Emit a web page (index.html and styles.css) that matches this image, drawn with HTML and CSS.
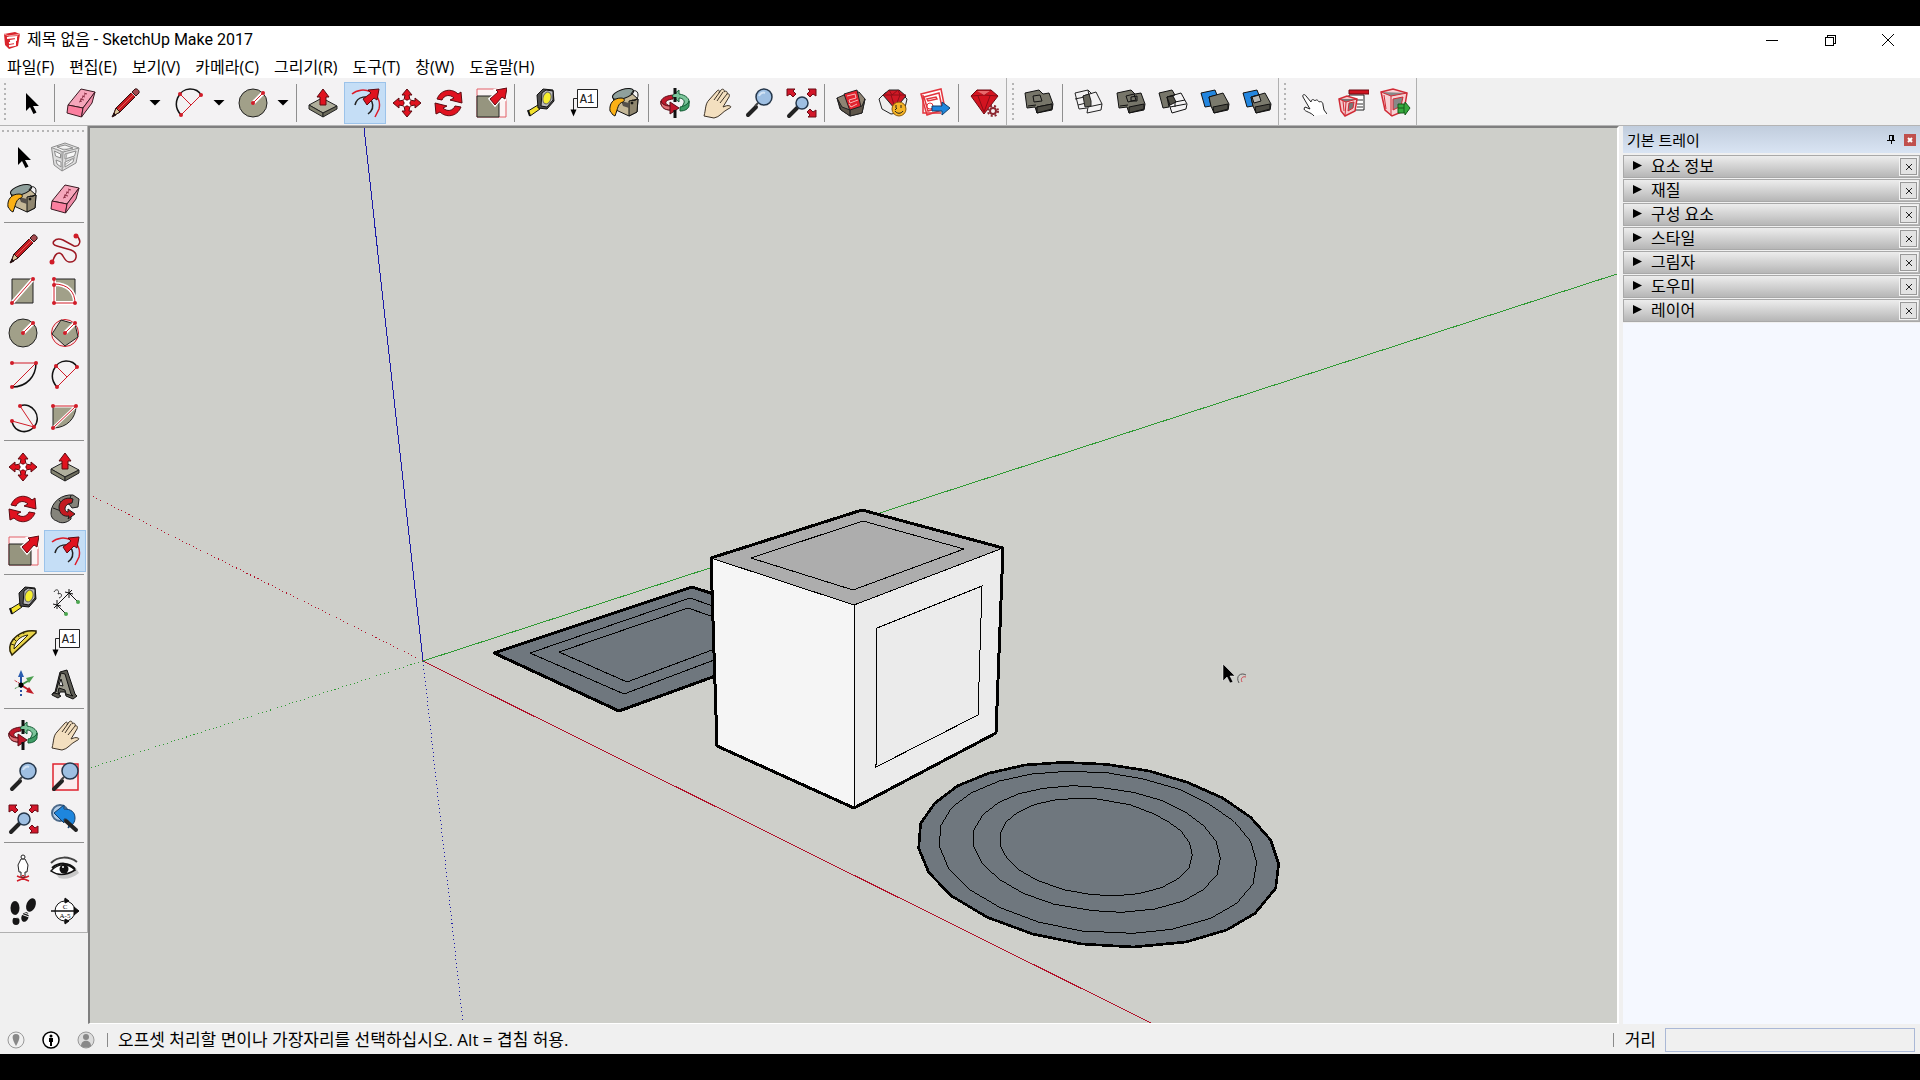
FILE: index.html
```html
<!DOCTYPE html>
<html lang="ko">

<head>
    <meta charset="UTF-8">
    <meta name="viewport" content="width=device-width, initial-scale=1.0">
    <title>제목 없음 - SketchUp Make 2017</title>
    <link rel="stylesheet" href="styles.css">
</head>

<body>
    <!-- icon sprite -->
    <svg class="sprite" aria-hidden="true">
        <symbol id="i-select" viewBox="0 0 32 32">
            <path d="M11 6v18l4-4 3.500 7 3-1.500-3.500-6.500h6z" fill="#000" />
        </symbol>
        <symbol id="i-component" viewBox="0 0 32 32" fill="none" stroke="#8d8d8d">
            <path d="M2.500 6.500L16 2l14 5-3 15-14 8L5 24z" fill="#dedede" />
            <path d="M2.500 6.500L14 11l16-4M14 11l-1 19M5.500 10l6 3v4l-5-2zM7 19l5 2v5l-4-3zM16 13l11-3-1.500 5L16 18zM16 21l9-4-1 4-8 5zM8 6l8-2 8 3-9 2z" fill="#f6f6f6" />
            <path d="M7 8l5 2 2 17M18 12l-2 12 10-8" stroke="#aaa" />
        </symbol>
        <symbol id="i-paint" viewBox="0 0 32 32" stroke="#111" stroke-linejoin="round">
            <path d="M4 10L20 4l9 8-1 13-8 4-13-6z" fill="#c4b797" />
            <path d="M20 14l9-2-1 13-8 4z" fill="#8f866f" />
            <path d="M12 14l8 2v5l-6-2z" fill="#55504a" stroke="none" />
            <ellipse cx="14" cy="7" rx="11" ry="4.500" transform="rotate(-18 14 7)" fill="#8fa09c" />
            <path d="M22 7c2-5 7-4 7 1 0 4-3 7-6 5" fill="none" />
            <path d="M1 24c-1-7 3-13 11-13 4 0 4 3 2 4-5 1-5 6-8 14-3-1-3-3-5-5z" fill="#fbb116" />
            <circle cx="23" cy="16" r="1" />
        </symbol>
        <symbol id="i-eraser" viewBox="0 0 32 32" stroke="#3a1a22" stroke-linejoin="round">
            <path d="M16 2l14 3-12 16-15-3z" fill="#f6a6bb" />
            <path d="M3 18l15 3-1.500 9L2 26z" fill="#fb7f9f" />
            <path d="M30 5l-3 11-10.500 14L18 21z" fill="#f08ca8" />
            <path d="M14 15l3-1M15 12l4 1M17 9l3 1M19 6l3 1M15 14l6-8" stroke="#8d3046" />
        </symbol>
        <symbol id="i-pencil" viewBox="0 0 32 32" stroke="#2c1010">
            <path d="M7 21L25 3l4 4-18 18-7 4z" fill="#c21a20" />
            <path d="M9 23L27 5" stroke="#ea5a55" />
            <path d="M7 21l4 4-7 4z" fill="#dcc79a" />
            <path d="M3 30l2-4 2 2z" fill="#111" />
            <path d="M23 5l3-3c2-1 5 2 4 4l-3 3z" fill="#a44b50" />
            <path d="M22 5l5 5" stroke="#ddd" />
        </symbol>
        <symbol id="i-freehand" viewBox="0 0 32 32" fill="none">
            <path d="M27 2C34 8 30 14 25 13L14 7C6 4 0 11 8 13L22 17C30 20 28 30 20 29 14 28 15 20 10 20 6 20 5 25 3 30" stroke="#9d1822" stroke-width="1.500" />
            <circle cx="3" cy="29" r="2.500" fill="#d01c28" />
            <circle cx="27" cy="3" r="2.500" fill="#d01c28" />
        </symbol>
        <symbol id="i-rect" viewBox="0 0 32 32">
            <path d="M5 4h21v24H5z" fill="#a1a089" stroke="#222" />
            <path d="M5 28L26 4" stroke="#fff" stroke-width="4" />
            <path d="M5 28L26 4" stroke="#d01c28" />
            <circle cx="5" cy="28" r="2" fill="#d01c28" />
            <circle cx="26" cy="4" r="2" fill="#d01c28" />
        </symbol>
        <symbol id="i-rotrect" viewBox="0 0 32 32" fill="none">
            <path d="M5 4h21v24H5z" fill="#a1a089" stroke="#222" />
            <path d="M5 4v24h21C26 17 19 9 5 9" stroke="#fff" stroke-width="4" />
            <path d="M5 4v24h21C26 17 19 9 5 9" stroke="#d01c28" />
            <g fill="#d01c28"><circle cx="5" cy="4" r="2" /><circle cx="5" cy="10" r="2" /><circle cx="5" cy="28" r="2" /><circle cx="26" cy="28" r="2" /></g>
        </symbol>
        <symbol id="i-circle" viewBox="0 0 32 32">
            <circle cx="16" cy="16" r="14" fill="#a1a089" stroke="#222" />
            <path d="M16 16l10-10" stroke="#fff" stroke-width="4" />
            <path d="M16 16l10-10" stroke="#d01c28" />
            <circle cx="16" cy="16" r="2" fill="#d01c28" />
            <circle cx="26" cy="6" r="2" fill="#d01c28" />
        </symbol>
        <symbol id="i-polygon" viewBox="0 0 32 32">
            <circle cx="16" cy="16" r="13.500" fill="#f7e6e6" stroke="#d01c28" />
            <path d="M12 3l14 4 3 13-13 9L3 17z" fill="#a1a089" stroke="#222" />
            <path d="M16 16l10-10" stroke="#fff" stroke-width="4" />
            <path d="M16 16l10-10" stroke="#d01c28" />
            <circle cx="16" cy="16" r="2" fill="#d01c28" />
            <circle cx="26" cy="6" r="2" fill="#d01c28" />
        </symbol>
        <symbol id="i-arc" viewBox="0 0 32 32" fill="none">
            <path d="M29 4C29 17 20 28 5 28" stroke="#111" stroke-width="1.500" />
            <path d="M5 28L29 4H5" stroke="#d01c28" />
            <g fill="#d01c28"><circle cx="5" cy="4" r="2" /><circle cx="29" cy="4" r="2" /><circle cx="5" cy="28" r="2" /></g>
        </symbol>
        <symbol id="i-arc2" viewBox="0 0 32 32" fill="none">
            <path d="M8 28C-2 17 6 2 17 2c5 0 9 2 11 6" stroke="#111" stroke-width="1.500" />
            <path d="M8 28L28 8M7 7l11 11" stroke="#d01c28" />
            <g fill="#d01c28"><circle cx="7" cy="7" r="2" /><circle cx="28" cy="8" r="2" /><circle cx="8" cy="28" r="2" /></g>
        </symbol>
        <symbol id="i-arc3" viewBox="0 0 32 32" fill="none">
            <path d="M13 5c12-5 23 11 14 21C19 34 8 31 5 21" stroke="#111" stroke-width="1.500" />
            <path d="M13 5l14 21L5 20" stroke="#d01c28" />
            <g fill="#d01c28"><circle cx="13" cy="5" r="2" /><circle cx="27" cy="26" r="2" /><circle cx="5" cy="20" r="2" /></g>
        </symbol>
        <symbol id="i-pie" viewBox="0 0 32 32" fill="none">
            <path d="M4 5h23c0 12-9 22-23 22z" fill="#a1a089" stroke="#222" />
            <path d="M4 27L27 5H4" stroke="#fff" stroke-width="3" />
            <path d="M4 27L27 5H4" stroke="#d01c28" />
            <g fill="#d01c28"><circle cx="4" cy="5" r="2" /><circle cx="27" cy="5" r="2" /><circle cx="4" cy="27" r="2" /></g>
        </symbol>
        <symbol id="i-move" viewBox="0 0 32 32" fill="#e0121f" stroke="#5c0a10">
            <path d="M16 2l5 6h-3l1 5h-6l1-5h-3z" />
            <path d="M16 30l-5-6h3l-1-5h6l-1 5h3z" />
            <path d="M2 16l6-5v3l5-1v6l-5-1v3z" />
            <path d="M30 16l-6 5v-3l-5 1v-6l5 1v-3z" />
            <path d="M13 13l6 6M19 13l-6 6" stroke="#fff" stroke-width="2" />
        </symbol>
        <symbol id="i-pushpull" viewBox="0 0 32 32" stroke="#222" stroke-linejoin="round">
            <path d="M2 18l13-7 15 8-14 7z" fill="#b0af9c" />
            <path d="M2 18l14 8v4L2 22z" fill="#83836f" />
            <path d="M30 19l-14 7v4l14-8z" fill="#6c6b5b" />
            <path d="M13 18v-8H10l6-8 6 8h-3v8z" fill="#e0121f" stroke="#5c0a10" />
        </symbol>
        <symbol id="i-rotate" viewBox="0 0 32 32" fill="#e0121f" stroke="#5c0a10">
            <path d="M4 12C8 2 19 1 25 7l3-2 1 11-12-3 4-2c-4-4-10-3-12 2z" />
            <path d="M28 20C24 30 13 31 7 25l-4 2-1-11 12 3-4 2c4 4 10 3 12-2z" />
        </symbol>
        <symbol id="i-followme" viewBox="0 0 32 32" stroke="#1c1c1c">
            <path d="M2 20C2 9 13 1 24 2l6 4-1 8-6 1-3-4c-6 0-9 4-7 8l9 3v4c-4 4-10 5-14 2-4-1-6-4-6-8z" fill="#85847b" />
            <path d="M22 2l-2 8M4 15l8 3M10 7l5 6" />
            <path d="M24 6c-7-3-14 2-14 8 0 7 5 10 10 9l-1 3 7-5-7-5v3c-4 0-5-8 4-9z" fill="#c21a20" />
        </symbol>
        <symbol id="i-scale" viewBox="0 0 32 32">
            <path d="M2 2h29v28H2z" fill="#fbf4f4" stroke="#e36068" />
            <path d="M2 9h22v21H2z" fill="#96957f" stroke="#222" />
            <path d="M15 12l8-7-2-2 11-2-2 11-3-2-7 8z" fill="#e0121f" stroke="#fff" stroke-width="3" />
            <path d="M15 12l8-7-2-2 11-2-2 11-3-2-7 8z" fill="#e0121f" stroke="#5c0a10" />
        </symbol>
        <symbol id="i-offset" viewBox="0 0 32 32" fill="none">
            <path d="M3 7C13-2 34 5 30 22l-4 8" stroke="#dd1a28" stroke-width="1.500" />
            <path d="M6 18c2-9 14-11 17-3 2 5 0 9-4 12" stroke="#222" stroke-width="1.500" />
            <path d="M14 12l8-6-3-3 11-1-2 11-3-2-7 7z" fill="#e0121f" stroke="#5c0a10" />
        </symbol>
        <symbol id="i-tape" viewBox="0 0 32 32" stroke="#111">
            <path d="M3 24l10-6 2 4-10 7z" fill="#f3e22c" />
            <path d="M3 23l2 6" stroke-width="2" />
            <path d="M12 8l6-6 10 1 1 11-7 8-9-1z" fill="#4b4b4b" />
            <path d="M17 6l4-3 7 1v9l-6 7-6-1z" fill="#bdbdbd" />
            <ellipse cx="22" cy="11" rx="4" ry="6" transform="rotate(16 22 11)" fill="#f6ee2e" stroke="#666" />
        </symbol>
        <symbol id="i-dimension" viewBox="0 0 32 32" fill="none" stroke="#111">
            <path d="M8 20L20 8M8 20l9 9M20 8l9 9" />
            <path d="M4 19l8 2M5 23l6-6M8 15v9M16 7l8 2M17 11l6-6M20 4v9" />
            <path d="M5 7c2-4 6-2 4 2 4-2 5 3 1 4" stroke="#333" />
            <circle cx="17" cy="29" r="2" fill="#4ba64f" stroke="none" />
            <circle cx="29" cy="17" r="2" fill="#4ba64f" stroke="none" />
        </symbol>
        <symbol id="i-text" viewBox="0 0 32 32">
            <path d="M10.500 2.500h20v18h-20z" fill="#fff" stroke="#222" />
            <path d="M10 11.500H6.500V23" fill="none" stroke="#222" />
            <path d="M3.500 22.500h6l-3 7z" />
            <text x="20" y="16" text-anchor="middle" class="icon-text">A1</text>
        </symbol>
        <symbol id="i-protractor" viewBox="0 0 32 32" stroke="#2b2405">
            <path d="M29 4C15 2 1 12 3 24l2 4L29 6z" fill="#e9d44a" stroke-width="1.500" />
            <path d="M21 8C13 9 7 15 7 22z" fill="#f3f2f3" />
            <path d="M16 5l1 2M11 8l1 2M7 12l2 2M4 17l3 1" />
        </symbol>
        <symbol id="i-axes" viewBox="0 0 32 32" fill="none">
            <path d="M15 16L7 11" stroke="#c01c28" stroke-dasharray="2 1" />
            <path d="M15 16l-8 4" stroke="#3f8f46" stroke-dasharray="2 1" />
            <path d="M14 17v11" stroke="#2a4fa0" stroke-width="2" stroke-dasharray="2 2" />
            <path d="M14 16V6" stroke="#2a4fa0" stroke-width="2" /><path d="M11 8l3-7 3 7z" fill="#2a5db0" />
            <path d="M14 16l7-4" stroke="#3f8f46" stroke-width="2" /><path d="M19 9l8-2-5 7z" fill="#4b9f50" />
            <path d="M14 16l8 5" stroke="#c01c28" stroke-width="2" /><path d="M22 18l5 7-8-2z" fill="#c01c28" />
            <circle cx="14" cy="16" r="2.500" fill="#000" />
        </symbol>
        <symbol id="i-text3d" viewBox="0 0 32 32" stroke="#111" stroke-linejoin="round">
            <path d="M3 25l3-2 5-20 7-2 8 24 2 2-4 3-7-3-1-4h-5l-1 3 2 1-3 2-6-3z" fill="#5c5b53" />
            <path d="M4 24l3-1 5-19 4 1 6 20 2 2-7-2-1-4-6-2-1 4 1 2-5-1z" fill="#9b9a8d" />
            <path d="M12 10l2 7-4-1z" fill="#eee" />
        </symbol>
        <symbol id="i-orbit" viewBox="0 0 32 32" stroke-linejoin="round">
            <path d="M14 8C4 9 1 13 2 17c1 3 5 6 9 6v4l9-6-9-6v4c-6-2-6-6 3-7z" fill="#c0182b" stroke="#5a0c16" />
            <path d="M2 14c1 3 4 5 9 5v4c-5 0-8-2-9-6z" fill="#de7076" stroke="#5a0c16" />
            <path d="M13 9l7-6v4c7 1 11 5 10 9-1 4-4 6-8 6l3-6c1-3-2-5-5-5v4z" fill="#7cc59b" stroke="#145c35" />
            <path d="M30 14v5c-1 3-4 5-9 5v-4c5-1 8-3 9-6z" fill="#3d9c65" stroke="#145c35" />
            <path d="M16 1v6M16 10v5M16 23v8" stroke="#111" stroke-width="3" />
        </symbol>
        <symbol id="i-pan" viewBox="0 0 32 32">
            <path d="M3 29c2-7 1-12 5-16l8-9c2-2 3 0 2 2l2-3c2-2 4 0 3 2 2-2 4 0 3 2 2-1 3 1 2 3l-6 10c3-1 4-2 7-1 2 1 0 2-2 3-6 3-8 8-14 9z" fill="#f3dfbf" stroke="#3c3125" />
            <path d="M18 6l-5 7M22 5l-6 9M26 7l-7 9" stroke="#3c3125" fill="none" />
        </symbol>
        <symbol id="i-zoom" viewBox="0 0 32 32">
            <path d="M5 28l8-8" stroke="#222" stroke-width="4" stroke-linecap="round" />
            <path d="M12 19l3-3" stroke="#444" stroke-width="2" />
            <circle cx="21" cy="10" r="8" fill="#9ebfe2" stroke="#24364a" stroke-width="1.500" />
            <path d="M16 9c1-3 4-4 6-3" stroke="#d2e3f4" stroke-width="2" fill="none" />
        </symbol>
        <symbol id="i-zoomwin" viewBox="0 0 32 32">
            <path d="M4 3h25v26H4z" fill="#fbecee" stroke="#e0222e" stroke-width="1.500" />
            <path d="M5 28l8-8" stroke="#222" stroke-width="4" stroke-linecap="round" />
            <circle cx="21" cy="10" r="8" fill="#9ebfe2" stroke="#24364a" stroke-width="1.500" />
            <path d="M12 19l3-3" stroke="#444" stroke-width="2" />
        </symbol>
        <symbol id="i-zoomext" viewBox="0 0 32 32">
            <path d="M4 29l8-8" stroke="#222" stroke-width="4" stroke-linecap="round" />
            <circle cx="17" cy="16" r="6" fill="#9ebfe2" stroke="#24364a" stroke-width="1.500" />
            <g fill="#d3172a" stroke="#6b0c15">
                <path d="M2 2h8l-2 2 3 3-3 3-3-3-3 2z" />
                <path d="M31 2h-8l2 2-3 3 3 3 3-3 3 2z" />
                <path d="M31 30h-8l2-2-3-3 3-3 3 3 3-2z" />
            </g>
        </symbol>
        <symbol id="i-prev" viewBox="0 0 32 32">
            <circle cx="11" cy="10" r="8" fill="#b4cde6" stroke="#4c6a8a" stroke-width="2" />
            <path d="M5 10l10-8v4c7 0 11 3 11 9 0 4-2 7-7 10 2-5 0-10-4-9v4z" fill="#1e86dd" stroke="#123e6b" />
            <path d="M17 18l10 9" stroke="#222" stroke-width="4" stroke-linecap="round" />
        </symbol>
        <symbol id="i-camera" viewBox="0 0 32 32" fill="#fff" stroke="#222">
            <path d="M10 28l12-5M10 23l12 5M16 22v5" stroke="#d01c28" stroke-width="1.500" />
            <path d="M14 6h4l3 6-1 7h-2v5h-4v-5h-2l-1-7z" />
            <circle cx="16" cy="4" r="2" />
            <path d="M13 25l3-3 3 3" fill="none" stroke="#d01c28" />
        </symbol>
        <symbol id="i-look" viewBox="0 0 32 32" fill="none">
            <path d="M7 21c8 3 13 0 20-6l3 5c-6 5-14 7-20 5z" fill="#c8c8c8" />
            <path d="M2 10C9 3 20 3 28 9" stroke="#444" stroke-width="2" />
            <path d="M2 18c6-7 16-9 24-1-8 5-17 6-24 1z" fill="#fff" stroke="#111" stroke-width="1.500" />
            <circle cx="15" cy="16" r="4.500" fill="#111" />
            <circle cx="14" cy="14" r="1" fill="#fff" />
            <path d="M3 15c7-6 17-6 23 1" stroke="#111" stroke-width="2" />
        </symbol>
        <symbol id="i-walk" viewBox="0 0 32 32" fill="#161616">
            <ellipse cx="8" cy="13" rx="4.500" ry="7" /><ellipse cx="9" cy="26" rx="3.500" ry="4" />
            <ellipse cx="24" cy="10" rx="4.500" ry="7" transform="rotate(22 24 10)" />
            <ellipse cx="18" cy="22" rx="3.500" ry="5" transform="rotate(22 18 22)" />
            <path d="M4 20l9 1M4 22l9 1M15 17l8 3M14 19l8 3" stroke="#f3f2f3" />
        </symbol>
        <symbol id="i-section" viewBox="0 0 32 32" stroke="#111">
            <path d="M16 4l5 4-5 4zM16 20l5 4-5 4z" fill="#111" />
            <circle cx="16" cy="16" r="10" fill="#fff" />
            <path d="M2 16h27" stroke-width="1.500" />
            <path d="M16 3l4 3-4 2zM16 29l4-3-4-2zM25 12l5 4-5 4z" fill="#111" />
            <g class="section-text" stroke="none"><text x="16" y="14">C</text><text x="16" y="23">A-5</text></g>
        </symbol>
        <symbol id="i-warehouse" viewBox="0 0 32 32" stroke="#222">
            <path d="M2 11l7-3 15-3 6 7-3 14-12 3-10-7z" fill="#8f8473" />
            <path d="M9 7L22 3l4 17-11 4z" fill="#e2242e" />
            <path d="M12 9l8-2 1 4-7 2 1 3 8-3M14 17l2 3 6-3" fill="none" stroke="#f9b9ba" />
            <path d="M2 11l5 9 8 3v6l-9-6zM15 23l12-4 3-7-3 14-12 3z" fill="#5e564a" />
        </symbol>
        <symbol id="i-extwarehouse" viewBox="0 0 32 32" stroke="#222">
            <path d="M2 12l6-6 14-2 8 8-3 13-13 2-9-5z" fill="#eee" />
            <path d="M6 8l6-5h10l7 6-11 13z" fill="#cf1825" />
            <path d="M6 8h23M12 3l3 5 6-5 2 5-5 13-4-13" fill="none" stroke="#8e0e18" />
            <circle cx="22" cy="22" r="7" fill="#f5b426" stroke="#8b5a08" />
            <path d="M19 18v3M24 18v3M18 24c2 3 6 3 8 0M20 21l-2 2" fill="none" stroke="#222" />
        </symbol>
        <symbol id="i-layout" viewBox="0 0 32 32" fill="#fff" stroke="#e3343d">
            <path d="M2 7l20-5 4 20-18 6z" stroke-width="1.500" />
            <path d="M5 10l15-4 3 14-14 4zM8 12l9-2 1 2-9 2zM4 8v18h18" fill="none" stroke-width="1.500" />
            <circle cx="11" cy="19" r="3" />
            <path d="M13 19h10v-4l8 6-8 7v-4H13z" fill="#1e86dd" stroke="#123e6b" />
        </symbol>
        <symbol id="i-extmanager" viewBox="0 0 32 32">
            <path d="M2 9l6-6h14l7 6-14 18z" fill="#d31420" stroke="#6d0a12" />
            <path d="M8 3l7 5 7-5M2 9l13-1 14 1M9 9l6 16 6-16" fill="none" stroke="#8d0c16" />
            <path d="M8 4h13l-6 4z" fill="#e96a6c" />
            <circle cx="24" cy="24" r="5" fill="#f3f2f3" stroke="#8c2630" stroke-width="2" stroke-dasharray="2 2" />
            <circle cx="24" cy="24" r="3" fill="#f3f2f3" stroke="#8c2630" stroke-width="2" />
        </symbol>
        <symbol id="i-solid-outer" viewBox="0 0 32 32" stroke="#111" stroke-linejoin="round">
            <path d="M2 6l14-3 4 4 6-1 4 11-1 6-15 3-2-6-8 1z" fill="#77766a" />
            <path d="M5 19l8-1M14 20l15-3M14 20v6M10 9l7-1 2 6-8 1z" fill="#7c7b6f" />
            <path d="M14 20l15-3v5l-15 4z" fill="#4d4c44" />
        </symbol>
        <symbol id="i-solid-intersect" viewBox="0 0 32 32" stroke="#222" fill="none">
            <path d="M2 6l13-3 2 12-12 3zM5 18l1 4 8-1M10 9l13-4 6 12-14 3zM15 20l-1 6 14-3 1-6M15 3l4 4M2 12l14-3" />
            <path d="M10 9l6-2 2 7v5l-6 1z" fill="#66655b" />
        </symbol>
        <symbol id="i-solid-union" viewBox="0 0 32 32" stroke="#111">
            <path d="M2 6l14-3 4 4 6-1 4 11-1 6-15 3-2-6-8 1z" fill="#77766a" />
            <path d="M14 20l15-3v5l-15 4z" fill="#4d4c44" />
            <path d="M5 19l8-1M11 9l8-2 2 6-8 2zM16 10l6-1v5h-6z" fill="none" />
        </symbol>
        <symbol id="i-solid-subtract" viewBox="0 0 32 32" stroke="#111">
            <path d="M2 6l13-3 3 5-8 2 2 10-6 1z" fill="#77766a" />
            <path d="M10 10l14-4 6 11-1 5-14 4-2-6zM13 20l16-3M15 9l3 6M18 15v5M18 15l10-2" fill="none" />
            <path d="M10 10l6-1 3 6-6 3z" fill="#4f4e45" />
        </symbol>
        <symbol id="i-solid-trim" viewBox="0 0 32 32" stroke="#111">
            <path d="M2 6l14-3 2 5-8 2 2 9-6 1z" fill="#2386df" />
            <path d="M10 10l14-4 6 11-1 6-14 3-3-7z" fill="#7b7a6d" />
            <path d="M14 20l15-3v5l-14 4z" fill="#4d4c44" />
        </symbol>
        <symbol id="i-solid-split" viewBox="0 0 32 32" stroke="#111">
            <path d="M2 6l14-3 2 5-8 2 2 9-6 1z" fill="#2386df" />
            <path d="M10 10l14-4 6 11-1 6-14 3-3-7z" fill="#7b7a6d" />
            <path d="M14 20l15-3v5l-14 4z" fill="#4d4c44" />
            <path d="M11 10l7-2 2 6-7 2z" fill="#b9b8b2" />
        </symbol>
        <symbol id="i-interact" viewBox="0 0 32 32">
            <path d="M19 29c-3-4-9-4-10-7l1-2 5 2-7-12c-1-3 2-3 3-1l5 6c0-3 3-3 4-1 1-2 3-1 4 1 2-1 4 0 4 3l1 5 3 4" fill="#fff" stroke="#222" />
        </symbol>
        <symbol id="i-options" viewBox="0 0 32 32" stroke="#d12a35">
            <path d="M12 8h15v15H12z" fill="#fff" stroke="#222" />
            <path d="M20 13h6M20 17h6M20 20h6" stroke="#333" />
            <path d="M12 3h20v4H12z" fill="#d01420" stroke="#6d0a12" />
            <path d="M2 12l8-3 10 3-2 12-10 5-4-5z" fill="#f4c9cb" stroke-width="1.500" />
            <path d="M2 12l7 3 11-3M9 15l-1 14M6 14l1 10M12 16l5-1-1 6-5 3z" fill="#777" />
        </symbol>
        <symbol id="i-attributes" viewBox="0 0 32 32" stroke="#d12a35">
            <path d="M2 5l12-3 14 4-3 18-12 5-7-6z" fill="#f6d2d4" stroke-width="1.500" />
            <path d="M2 5l10 4 16-3M12 9v20M5 8l2 14M14 12l10-2-2 9-8 4z" fill="#888" />
            <path d="M19 17h7v-2l5 6-5 7v-2h-7zM19 21h6M25 17v9" fill="#35a93c" stroke="#155a1a" />
        </symbol>
    </svg>

    <div class="window">
        <header class="titlebar">
            <svg class="app-logo" viewBox="0 0 18 18" aria-hidden="true">
                <path d="M1 3l11-2 5 2-2 12-9 3-4-4z" fill="#d9252c" />
                <path d="M1 3l5 2 11-2M6 5l9 0" stroke="#f39a9a" fill="none" />
                <path d="M4 7l9-1v3l-6 1M6 12l6-1v3l-6 1" stroke="#fff" stroke-width="2" fill="none" />
            </svg>
            <h1 class="window-title">제목 없음 - SketchUp Make 2017</h1>
            <div class="window-controls">
                <button type="button" aria-label="최소화"><svg viewBox="0 0 12 12"><path d="M0 6h12" /></svg></button>
                <button type="button" aria-label="이전 크기로"><svg viewBox="0 0 12 12"><path d="M1 3h8v8H1zM3 3V1h8v8H9" /></svg></button>
                <button type="button" aria-label="닫기"><svg viewBox="0 0 12 12"><path d="M0 0l12 12M12 0L0 12" /></svg></button>
            </div>
        </header>

        <nav class="menubar">
            <button type="button">파일(F)</button>
            <button type="button">편집(E)</button>
            <button type="button">보기(V)</button>
            <button type="button">카메라(C)</button>
            <button type="button">그리기(R)</button>
            <button type="button">도구(T)</button>
            <button type="button">창(W)</button>
            <button type="button">도움말(H)</button>
        </nav>

        <div class="toolbar">
            <div class="toolbar-group">
                <span class="grip"></span>
                <button type="button" class="tool" aria-label="선택"><svg><use href="#i-select" /></svg></button>
                <span class="sep"></span>
                <button type="button" class="tool" aria-label="지우개"><svg><use href="#i-eraser" /></svg></button>
                <div class="split">
                    <button type="button" class="tool" aria-label="선"><svg><use href="#i-pencil" /></svg></button>
                    <button type="button" class="drop" aria-label="선 도구"></button>
                </div>
                <div class="split">
                    <button type="button" class="tool" aria-label="호"><svg><use href="#i-arc2" /></svg></button>
                    <button type="button" class="drop" aria-label="호 도구"></button>
                </div>
                <div class="split">
                    <button type="button" class="tool" aria-label="원"><svg><use href="#i-circle" /></svg></button>
                    <button type="button" class="drop" aria-label="도형 도구"></button>
                </div>
                <span class="sep"></span>
                <button type="button" class="tool" aria-label="밀기/끌기"><svg><use href="#i-pushpull" /></svg></button>
                <button type="button" class="tool active" aria-label="오프셋"><svg><use href="#i-offset" /></svg></button>
                <button type="button" class="tool" aria-label="이동"><svg><use href="#i-move" /></svg></button>
                <button type="button" class="tool" aria-label="회전"><svg><use href="#i-rotate" /></svg></button>
                <button type="button" class="tool" aria-label="배율"><svg><use href="#i-scale" /></svg></button>
                <span class="sep"></span>
                <button type="button" class="tool" aria-label="줄자"><svg><use href="#i-tape" /></svg></button>
                <button type="button" class="tool" aria-label="텍스트"><svg><use href="#i-text" /></svg></button>
                <button type="button" class="tool" aria-label="페인트통"><svg><use href="#i-paint" /></svg></button>
                <span class="sep"></span>
                <button type="button" class="tool" aria-label="궤도"><svg><use href="#i-orbit" /></svg></button>
                <button type="button" class="tool" aria-label="이동 보기"><svg><use href="#i-pan" /></svg></button>
                <button type="button" class="tool" aria-label="확대/축소"><svg><use href="#i-zoom" /></svg></button>
                <button type="button" class="tool" aria-label="범위 확대/축소"><svg><use href="#i-zoomext" /></svg></button>
                <span class="sep"></span>
                <button type="button" class="tool" aria-label="3D 웨어하우스"><svg><use href="#i-warehouse" /></svg></button>
                <button type="button" class="tool" aria-label="확장 프로그램 웨어하우스"><svg><use href="#i-extwarehouse" /></svg></button>
                <button type="button" class="tool" aria-label="LayOut으로 보내기"><svg><use href="#i-layout" /></svg></button>
                <span class="sep"></span>
                <button type="button" class="tool" aria-label="확장 프로그램 관리자"><svg><use href="#i-extmanager" /></svg></button>
            </div>
            <div class="toolbar-group">
                <span class="grip"></span>
                <button type="button" class="tool" aria-label="외부 쉘"><svg><use href="#i-solid-outer" /></svg></button>
                <span class="sep"></span>
                <button type="button" class="tool" aria-label="교차"><svg><use href="#i-solid-intersect" /></svg></button>
                <button type="button" class="tool" aria-label="결합"><svg><use href="#i-solid-union" /></svg></button>
                <button type="button" class="tool" aria-label="빼기"><svg><use href="#i-solid-subtract" /></svg></button>
                <button type="button" class="tool" aria-label="트리밍"><svg><use href="#i-solid-trim" /></svg></button>
                <button type="button" class="tool" aria-label="분할"><svg><use href="#i-solid-split" /></svg></button>
            </div>
            <div class="toolbar-group">
                <span class="grip"></span>
                <button type="button" class="tool" aria-label="상호 작용"><svg><use href="#i-interact" /></svg></button>
                <button type="button" class="tool" aria-label="구성 요소 옵션"><svg><use href="#i-options" /></svg></button>
                <button type="button" class="tool" aria-label="구성 요소 속성"><svg><use href="#i-attributes" /></svg></button>
            </div>
        </div>

        <div class="workspace">
            <aside class="side">
                <div class="tool-set">
                    <span class="grip-h"></span>
                    <button type="button" class="tool" aria-label="선택"><svg><use href="#i-select" /></svg></button>
                    <button type="button" class="tool" aria-label="구성 요소 만들기"><svg><use href="#i-component" /></svg></button>
                    <button type="button" class="tool" aria-label="페인트통"><svg><use href="#i-paint" /></svg></button>
                    <button type="button" class="tool" aria-label="지우개"><svg><use href="#i-eraser" /></svg></button>
                    <span class="sep-h"></span>
                    <button type="button" class="tool" aria-label="선"><svg><use href="#i-pencil" /></svg></button>
                    <button type="button" class="tool" aria-label="자유 곡선"><svg><use href="#i-freehand" /></svg></button>
                    <button type="button" class="tool" aria-label="직사각형"><svg><use href="#i-rect" /></svg></button>
                    <button type="button" class="tool" aria-label="회전된 직사각형"><svg><use href="#i-rotrect" /></svg></button>
                    <button type="button" class="tool" aria-label="원"><svg><use href="#i-circle" /></svg></button>
                    <button type="button" class="tool" aria-label="다각형"><svg><use href="#i-polygon" /></svg></button>
                    <button type="button" class="tool" aria-label="호"><svg><use href="#i-arc" /></svg></button>
                    <button type="button" class="tool" aria-label="2포인트 호"><svg><use href="#i-arc2" /></svg></button>
                    <button type="button" class="tool" aria-label="3포인트 호"><svg><use href="#i-arc3" /></svg></button>
                    <button type="button" class="tool" aria-label="파이"><svg><use href="#i-pie" /></svg></button>
                    <span class="sep-h"></span>
                    <button type="button" class="tool" aria-label="이동"><svg><use href="#i-move" /></svg></button>
                    <button type="button" class="tool" aria-label="밀기/끌기"><svg><use href="#i-pushpull" /></svg></button>
                    <button type="button" class="tool" aria-label="회전"><svg><use href="#i-rotate" /></svg></button>
                    <button type="button" class="tool" aria-label="따라가기"><svg><use href="#i-followme" /></svg></button>
                    <button type="button" class="tool" aria-label="배율"><svg><use href="#i-scale" /></svg></button>
                    <button type="button" class="tool active" aria-label="오프셋"><svg><use href="#i-offset" /></svg></button>
                    <span class="sep-h"></span>
                    <button type="button" class="tool" aria-label="줄자"><svg><use href="#i-tape" /></svg></button>
                    <button type="button" class="tool" aria-label="치수"><svg><use href="#i-dimension" /></svg></button>
                    <button type="button" class="tool" aria-label="각도기"><svg><use href="#i-protractor" /></svg></button>
                    <button type="button" class="tool" aria-label="텍스트"><svg><use href="#i-text" /></svg></button>
                    <button type="button" class="tool" aria-label="축"><svg><use href="#i-axes" /></svg></button>
                    <button type="button" class="tool" aria-label="3D 텍스트"><svg><use href="#i-text3d" /></svg></button>
                    <span class="sep-h"></span>
                    <button type="button" class="tool" aria-label="궤도"><svg><use href="#i-orbit" /></svg></button>
                    <button type="button" class="tool" aria-label="이동 보기"><svg><use href="#i-pan" /></svg></button>
                    <button type="button" class="tool" aria-label="확대/축소"><svg><use href="#i-zoom" /></svg></button>
                    <button type="button" class="tool" aria-label="창 확대/축소"><svg><use href="#i-zoomwin" /></svg></button>
                    <button type="button" class="tool" aria-label="범위 확대/축소"><svg><use href="#i-zoomext" /></svg></button>
                    <button type="button" class="tool" aria-label="이전"><svg><use href="#i-prev" /></svg></button>
                    <span class="sep-h"></span>
                    <button type="button" class="tool" aria-label="카메라 배치"><svg><use href="#i-camera" /></svg></button>
                    <button type="button" class="tool" aria-label="둘러보기"><svg><use href="#i-look" /></svg></button>
                    <button type="button" class="tool" aria-label="걷기"><svg><use href="#i-walk" /></svg></button>
                    <button type="button" class="tool" aria-label="단면"><svg><use href="#i-section" /></svg></button>
                </div>
            </aside>

            <main class="viewport">
                <svg class="scene" viewBox="90 128 1527 895" preserveAspectRatio="xMinYMin slice">
                    <!-- axes -->
                    <g class="axes">
                        <path class="axis-green" d="M423 661L1617 274" />
                        <path class="axis-red" d="M423 661L1151 1023" />
                        <path class="axis-blue" d="M423 661L364 128" />
                        <path class="axis-green dotted" d="M423 661L90 768" />
                        <path class="axis-red dotted" d="M423 661L90 495" />
                        <path class="axis-blue dotted" d="M423 661l40 362" />
                    </g>
                    <!-- flat rectangle -->
                    <path class="ground" d="M494 653l198-66 40 13v70L619 711z" />
                    <path class="edge" d="M530 653l160-55 40 14v42L624 694zM559 652l129-44 40 14v22L627 682z" />
                    <!-- cube -->
                    <path class="face-top" d="M711 558l151-48 141 38-149 57z" />
                    <path class="face-left" d="M711 558l143 47v203l-137-62z" />
                    <path class="face-right" d="M854 605l149-57-7 185-142 75z" />
                    <path class="edge" d="M711 558l143 47 149-57M854 605v203M863 521l101 28-111 41-102-32zM982 586l-4 129-102 52 1-139z" />
                    <path class="outline" d="M711 558l151-48 141 38-7 185-142 75-137-62z" />
                    <!-- circle with offsets, drawn at three times its size -->
                    <g transform="translate(900 640) scale(.33333)">
                        <polygon class="ground big" points="490,367 620,373 748,393 862,427 968,474 1052,532 1112,600 1136,672 1127,745 1065,820 980,870 858,906 700,921 545,912 398,882 262,832 153,767 86,697 56,625 62,550 104,490 172,438 265,400 375,375" />
                        <polygon class="edge big" points="395,402 500,394 620,398 730,417 838,448 930,494 1003,545 1052,604 1070,667 1059,732 1010,790 932,835 815,868 700,880 545,873 415,846 300,803 208,748 145,684 118,618 122,558 155,503 213,459 298,423" />
                        <polygon class="edge big" points="430,445 520,437 605,443 700,457 785,481 860,519 912,558 948,603 961,655 951,706 908,750 850,783 765,807 665,817 580,812 460,792 370,760 298,718 246,670 220,618 220,573 248,525 295,488 357,461" />
                        <polygon class="edge big" points="470,479 540,475 590,477 690,494 755,519 802,543 842,572 868,607 877,645 867,684 836,715 785,743 715,761 643,768 570,763 490,749 410,720 357,690 320,653 301,617 301,579 319,545 352,518 405,493" />
                    </g>
                    <!-- offset cursor -->
                    <path d="M1223 664v17l4-4 3 6 3-1-3-6h5z" stroke="#fff" stroke-width="0.500" />
                    <path d="M1239 683c-4-7 2-11 7-8" fill="none" stroke="#555" />
                    <path d="M1242 682c-2-4 1-6 4-5" fill="none" stroke="#d04a52" />
                </svg>
            </main>

            <aside class="tray">
                <div class="tray-head">
                    <h2>기본 트레이</h2>
                    <button type="button" class="pin" aria-label="자동 숨김"><svg viewBox="0 0 8 9"><path d="M2 0v5M5 0v5M6 0v5M2 0h4M0 5h8M4 5v4" /></svg></button>
                    <button type="button" class="tray-close" aria-label="트레이 닫기"><svg viewBox="0 0 6 6"><path d="M1 1l4 4M5 1L1 5" /></svg></button>
                </div>
                <ul class="panels">
                    <li><button type="button" class="panel-name">요소 정보</button><button type="button" class="panel-close" aria-label="닫기"><svg viewBox="0 0 6 6"><path d="M0 0l6 6M6 0L0 6" /></svg></button></li>
                    <li><button type="button" class="panel-name">재질</button><button type="button" class="panel-close" aria-label="닫기"><svg viewBox="0 0 6 6"><path d="M0 0l6 6M6 0L0 6" /></svg></button></li>
                    <li><button type="button" class="panel-name">구성 요소</button><button type="button" class="panel-close" aria-label="닫기"><svg viewBox="0 0 6 6"><path d="M0 0l6 6M6 0L0 6" /></svg></button></li>
                    <li><button type="button" class="panel-name">스타일</button><button type="button" class="panel-close" aria-label="닫기"><svg viewBox="0 0 6 6"><path d="M0 0l6 6M6 0L0 6" /></svg></button></li>
                    <li><button type="button" class="panel-name">그림자</button><button type="button" class="panel-close" aria-label="닫기"><svg viewBox="0 0 6 6"><path d="M0 0l6 6M6 0L0 6" /></svg></button></li>
                    <li><button type="button" class="panel-name">도우미</button><button type="button" class="panel-close" aria-label="닫기"><svg viewBox="0 0 6 6"><path d="M0 0l6 6M6 0L0 6" /></svg></button></li>
                    <li><button type="button" class="panel-name">레이어</button><button type="button" class="panel-close" aria-label="닫기"><svg viewBox="0 0 6 6"><path d="M0 0l6 6M6 0L0 6" /></svg></button></li>
                </ul>
            </aside>
        </div>

        <footer class="statusbar">
            <button type="button" class="status-icon" aria-label="위치">
                <svg viewBox="0 0 18 18"><circle cx="9" cy="9" r="8" fill="none" stroke="#999" /><path d="M9 3c5 0 4 5 0 12C5 8 4 3 9 3z" fill="#888" /></svg>
            </button>
            <button type="button" class="status-icon" aria-label="크레딧">
                <svg viewBox="0 0 18 18"><circle cx="9" cy="9" r="8" fill="#fff" stroke="#000" stroke-width="1.500" /><circle cx="9" cy="5" r="1.500" /><path d="M7 7h4v4h-1v4H8v-4H7z" /></svg>
            </button>
            <button type="button" class="status-icon" aria-label="로그인">
                <svg viewBox="0 0 18 18"><circle cx="9" cy="9" r="8" fill="#ddd" stroke="#999" /><circle cx="9" cy="6" r="3" fill="#888" /><path d="M4 15c0-7 10-7 10 0-3 2-7 2-10 0z" fill="#888" /></svg>
            </button>
            <p class="hint">오프셋 처리할 면이나 가장자리를 선택하십시오. Alt = 겹침 허용.</p>
            <label class="measure" for="distance">거리</label>
            <input type="text" id="distance" class="distance">
        </footer>
    </div>
</body>

</html>
```
FILE: styles.css
```css
* {
    box-sizing: border-box;
    margin: 0;
    padding: 0;
}

body {
    display: flex;
    height: 100vh;
    padding: 26px 0;
    background: #000;
    color: #000;
    font-family: "Open Sans", "Noto Sans CJK KR", sans-serif;
    font-size: 16px;
    overflow: hidden;
}

button {
    border: none;
    background: none;
    color: inherit;
    font: inherit;
}

.sprite {
    display: none;
}

.window {
    flex: 1;
    min-width: 0;
    display: flex;
    flex-direction: column;
    background: #f0f0f0;
}

/* title and menu */
.titlebar {
    display: flex;
    align-items: center;
    height: 28px;
    padding: 0 3px;
    background: #fff;
}

.app-logo {
    width: 18px;
    height: 18px;
}

.window-title {
    flex: 1;
    padding-left: 6px;
    font-family: Roboto, "Noto Sans CJK KR", sans-serif;
    font-size: 16px;
    font-weight: normal;
    line-height: 20px;
}

.window-controls {
    display: flex;
}

.window-controls button {
    width: 58px;
    height: 28px;
}

.window-controls svg {
    width: 12px;
    height: 12px;
    fill: none;
    stroke: #000;
    shape-rendering: crispEdges;
}

.menubar {
    display: flex;
    height: 24px;
    padding-left: 7px;
    gap: 15px;
    background: #fff;
}

.menubar button {
    padding-top: 2px;
    line-height: 22px;
}

/* top toolbar */
.toolbar {
    display: flex;
    height: 48px;
    border-bottom: 1px solid #b4b4b4;
}

.toolbar-group {
    display: flex;
    align-items: center;
    padding: 2px 0 0 4px;
    background: #f3f2f3;
    border-right: 1px solid #b0b0b0;
}

.toolbar-group + .toolbar-group {
    padding-left: 5px;
}

.grip {
    width: 2px;
    height: 40px;
    margin-right: 4px;
    background: repeating-linear-gradient(#b5b5b5 0 2px, transparent 2px 5px);
}

.sep {
    width: 1px;
    height: 38px;
    margin: 0 5px 0 2px;
    background: #8f8f8f;
}

.tool {
    display: flex;
    align-items: center;
    justify-content: center;
    width: 42px;
    height: 42px;
}

.tool svg {
    width: 32px;
    height: 32px;
}

.tool.active {
    background: #c5def6;
    box-shadow: inset 0 0 0 1px #9cc3ea;
}

.split {
    display: flex;
    align-items: center;
    width: 64px;
    padding-left: 2px;
}

.drop {
    width: 18px;
    height: 42px;
}

.drop::before {
    content: "";
    display: block;
    width: 12px;
    height: 6px;
    margin: 0 auto;
    background: #000;
    clip-path: polygon(0 0, 100% 0, 50% 100%);
}

.icon-text {
    font: 12px "Liberation Mono", monospace;
    fill: #222;
}

.section-text {
    font: 7px "Liberation Serif", serif;
    text-anchor: middle;
}

/* left tools, drawing area, tray */
.workspace {
    flex: 1;
    display: flex;
    min-height: 0;
}

.side {
    width: 88px;
}

.tool-set {
    display: grid;
    grid-template-columns: 42px 42px;
    padding-left: 2px;
    background: #f3f2f3;
    border-right: 1px solid #b0b0b0;
    border-bottom: 1px solid #b0b0b0;
}

.grip-h {
    grid-column: 1 / 3;
    height: 2px;
    margin: 4px 0;
    background: repeating-linear-gradient(90deg, #b5b5b5 0 2px, transparent 2px 5px);
}

.sep-h {
    grid-column: 1 / 3;
    height: 1px;
    margin: 2px 2px 5px;
    background: #8f8f8f;
}

.viewport {
    flex: 1;
    min-width: 0;
    border: 2px solid #7f7f7f;
    border-right-color: #fff;
    border-bottom: 1px solid #fff;
}

.scene {
    display: block;
    width: 100%;
    height: 100%;
    background: #cecfca;
}

.axes,
.edge,
.outline,
.ground {
    fill: none;
    shape-rendering: crispEdges;
}

.axis-green {
    stroke: #2f9a33;
}

.axis-red {
    stroke: #b0122a;
}

.axis-blue {
    stroke: #1a1aa8;
}

.dotted {
    stroke-dasharray: 1 3;
}

.edge {
    stroke: #000;
}

.outline,
.ground {
    stroke: #000;
    stroke-width: 3px;
    stroke-linejoin: round;
}

.ground {
    fill: #6f777e;
}

.edge.big {
    stroke-width: 3px;
}

.ground.big {
    stroke-width: 8px;
}

.face-top {
    fill: #adadad;
}

.face-left {
    fill: #f5f5f5;
}

.face-right {
    fill: #ebebeb;
}

.tray {
    display: flex;
    flex-direction: column;
    width: 301px;
    padding-left: 4px;
}

.tray::after {
    content: "";
    flex: 1;
    background: #f5f8ff;
}

.tray-head {
    display: flex;
    align-items: center;
    height: 27px;
    padding: 0 4px;
    background: linear-gradient(#c1cddd, #d9e4f3);
}

.tray-head h2 {
    flex: 1;
    font-size: 15px;
    font-weight: normal;
    line-height: 20px;
}

.tray-head button {
    display: flex;
    align-items: center;
    justify-content: center;
    width: 12px;
    height: 12px;
}

.pin svg {
    width: 8px;
    height: 9px;
    fill: none;
    stroke: #000;
    shape-rendering: crispEdges;
}

.tray-head .tray-close {
    margin-left: 7px;
    background: #c0504d;
}

.tray-close svg {
    width: 6px;
    height: 6px;
    stroke: #fff;
    stroke-width: 2px;
}

.panels {
    padding-top: 2px;
    list-style: none;
    background: #f0f0f0;
}

.panels li {
    display: flex;
    align-items: center;
    height: 23px;
    margin-bottom: 1px;
    border: 1px solid #a9a9a9;
    background: linear-gradient(#ededed, #b6b6b6);
}

.panel-name {
    flex: 1;
    display: flex;
    align-items: center;
    gap: 9px;
    padding: 0 0 2px 9px;
    line-height: 18px;
}

.panel-name::before {
    content: "";
    width: 9px;
    height: 9px;
    background: #000;
    clip-path: polygon(0 0, 100% 50%, 0 100%);
}

.panel-close {
    display: flex;
    align-items: center;
    justify-content: center;
    width: 17px;
    height: 17px;
    margin-right: 2px;
    border: 1px solid #999;
    outline: 1px solid #f4f4f4;
    background: #e3e3e3;
}

.panel-close svg {
    width: 6px;
    height: 6px;
    stroke: #222;
    stroke-width: 1px;
}

/* status bar */
.statusbar {
    display: flex;
    align-items: center;
    height: 30px;
    padding: 1px 5px 0 7px;
}

.status-icon {
    width: 18px;
    height: 18px;
    margin-right: 17px;
}

.status-icon svg {
    display: block;
    width: 18px;
    height: 18px;
}

.hint {
    flex: 1;
    margin-left: -5px;
    padding-left: 10px;
    border-left: 1px solid #8a8a8a;
    font-size: 17px;
    line-height: 14px;
}

.measure {
    padding: 0 9px 0 11px;
    border-left: 1px solid #8a8a8a;
    font-size: 17px;
    line-height: 14px;
}

.distance {
    width: 250px;
    height: 24px;
    padding: 0 4px;
    border: 1px solid #aab8d6;
    background: #f0f0f0;
    font: inherit;
}
```
